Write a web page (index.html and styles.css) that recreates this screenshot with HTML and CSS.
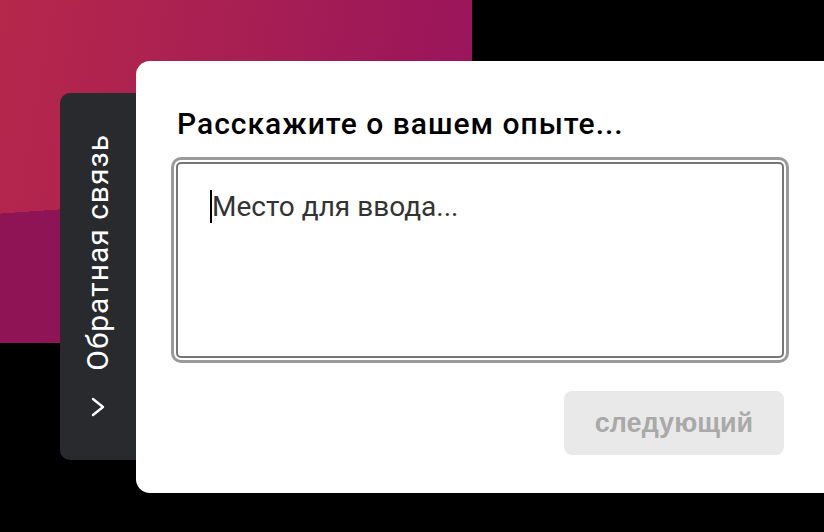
FILE: index.html
```html
<!DOCTYPE html>
<html lang="ru">
<head>
<meta charset="utf-8">
<link rel="stylesheet" href="styles.css">
</head>
<body>
<div class="widget">
  <div class="tab">
    <span class="tab-label">Обратная связь</span>
    <svg class="chevron" width="14" height="20" viewBox="0 0 14 20"><polyline points="2,2 12,10 2,18" fill="none" stroke="#fff" stroke-width="2.4" stroke-linecap="round" stroke-linejoin="round"/></svg>
  </div>
  <div class="panel">
    <div class="content">
      <h1 class="title">Расскажите о вашем опыте...</h1>
      <div class="field">
        <span class="caret"></span><span class="placeholder">Место для ввода...</span>
      </div>
      <div class="actions">
        <button class="next" disabled>следующий</button>
      </div>
    </div>
  </div>
</div>
</body>
</html>
```
FILE: styles.css
```css
html, body {
  margin: 0;
  padding: 0;
  height: 100%;
  overflow: hidden;
}
body {
  background-color: #000;
  background-image:
    linear-gradient(176deg, transparent 56.8%, #8e1456 56.8%),
    linear-gradient(100deg, #b6274b 0%, #a61e53 50%, #97135e 100%);
  background-size: 472px 343px, 472px 343px;
  background-repeat: no-repeat;
  font-family: Roboto, "Noto Sans", sans-serif;
}
.widget {
  display: flex;
  align-items: flex-start;
  padding: 61px 0 0 60px;
  width: 900px;
}
.tab {
  margin-top: 32px;
  width: 76px;
  height: 367px;
  box-sizing: border-box;
  background: #292a2d;
  border-radius: 10px 0 0 10px;
  display: flex;
  flex-direction: column;
  align-items: center;
  padding-top: 41px;
  gap: 26px;
  color: #fff;
}
.tab-label {
  writing-mode: vertical-rl;
  transform: rotate(180deg);
  font-size: 30px;
  letter-spacing: 1px;
  line-height: 34px;
  white-space: nowrap;
}
.chevron {
  display: block;
}
.panel {
  background: #fff;
  width: 760px;
  height: 432px;
  border-radius: 14px 0 0 14px;
  box-sizing: border-box;
  padding: 45px 0 0 40px;
}
.content {
  width: 608px;
}
.title {
  margin: 0 0 20px 1px;
  font-size: 30px;
  letter-spacing: 1px;
  line-height: 36px;
  font-weight: 500;
  color: #000;
  white-space: nowrap;
}
.field {
  height: 196px;
  box-sizing: border-box;
  border: 2px solid #767676;
  border-radius: 5px;
  box-shadow: 0 0 0 2px #fff, 0 0 0 5px #9a9a9a;
  padding: 26px 32px;
  display: flex;
  align-items: flex-start;
}
.caret {
  width: 2px;
  height: 33px;
  background: #000;
}
.placeholder {
  font-size: 28px;
  line-height: 34px;
  color: #333;
}
.actions {
  display: flex;
  justify-content: flex-end;
  margin-top: 33px;
}
.next {
  width: 220px;
  height: 64px;
  border: none;
  border-radius: 8px;
  background: #e9e9e9;
  color: #a9a9a9;
  font-family: "Liberation Sans", Arial, sans-serif;
  font-weight: 700;
  font-size: 27px;
  padding: 0;
}
```
